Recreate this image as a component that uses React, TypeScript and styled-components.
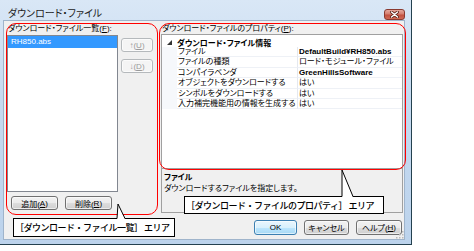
import styled, { createGlobalStyle } from 'styled-components';

const GlobalStyle = createGlobalStyle`
  html, body {
    margin: 0;
    padding: 0;
    background: #fff;
  }
  body {
    font-family: "Liberation Sans", "Noto Sans CJK JP", sans-serif;
    font-feature-settings: "palt" 1;
    color: #000;
  }
`;

const Desktop = styled.div`
  position: relative;
  width: 474px;
  height: 251px;
  overflow: hidden;
  background: #fff;
`;

const Window = styled.div`
  width: 412px;
  height: 245px;
  box-sizing: border-box;
  display: flex;
  flex-direction: column;
  padding: 0 6px 4px 3px;
  background: linear-gradient(180deg, #d9e7f6 0%, #c6daf0 40%, #bcd3ec 100%);
  border-right: 1px solid #24414f;
  border-bottom: 1px solid #24414f;
`;

const TitleBar = styled.div`
  height: 20px;
  box-sizing: border-box;
  padding: 6px 0 0 5px;
  display: flex;
  align-items: center;
`;

const Title = styled.span`
  font-size: 10px;
  line-height: 13px;
  color: #1b1b1b;
`;

const CloseButton = styled.div`
  margin-left: auto;
  margin-top: 3px;
  width: 21px;
  height: 11px;
  box-sizing: border-box;
  border: 1px solid #8a3a30;
  border-radius: 3px;
  background: linear-gradient(180deg, #e6a89c 0%, #d57e6f 45%, #c2503f 55%, #cf6a55 100%);
  display: flex;
  align-items: center;
  justify-content: center;
`;

const Client = styled.div`
  position: relative;
  flex: 1;
  display: flex;
  flex-direction: column;
  padding: 3px 1px 4px 3px;
  background: #f0f0f0;
  border: 1px solid #9fb4cb;
`;

const Main = styled.div`
  height: 189px;
  display: flex;
  gap: 7px;
`;

const LeftPane = styled.div`
  width: 146px;
  display: flex;
  flex-direction: column;
`;

const RightPane = styled.div`
  flex: 1;
  display: flex;
  flex-direction: column;
  padding-left: 1px;
`;

const Label = styled.div<{ $h: number }>`
  height: ${(p) => p.$h}px;
  font-size: 8px;
  line-height: 10px;
  padding-left: 1px;
  white-space: nowrap;
`;

const Key = styled.span`
  text-decoration: underline;
`;

const ListRow = styled.div`
  display: flex;
  gap: 3px;
`;

const ListBox = styled.div`
  width: 111px;
  height: 157px;
  box-sizing: border-box;
  border: 1px solid #828790;
  background: #fff;
`;

const ListItem = styled.div<{ $selected?: boolean }>`
  height: 12px;
  font-size: 8px;
  line-height: 12px;
  padding-left: 3px;
  background: ${(p) => (p.$selected ? '#3399ff' : 'transparent')};
  color: ${(p) => (p.$selected ? '#fff' : '#000')};
`;

const SideButtons = styled.div`
  padding-top: 3px;
  display: flex;
  flex-direction: column;
  gap: 7px;
`;

const Button = styled.div<{ $w: number; $h?: number; $focused?: boolean; $disabled?: boolean }>`
  width: ${(p) => p.$w}px;
  height: ${(p) => p.$h ?? 14}px;
  box-sizing: border-box;
  display: flex;
  align-items: center;
  justify-content: center;
  font-size: 8px;
  white-space: nowrap;
  border-radius: 3px;
  color: ${(p) => (p.$disabled ? '#9a9a9a' : '#000')};
  border: 1px solid
    ${(p) => (p.$disabled ? '#b5b9bc' : p.$focused ? '#3c7fb1' : '#707070')};
  background: ${(p) =>
    p.$disabled
      ? '#f4f4f4'
      : p.$focused
        ? 'linear-gradient(180deg, #eaf6fd 0%, #d9f0fc 50%, #bee6fd 51%, #a7d9f5 100%)'
        : 'linear-gradient(180deg, #f2f2f2 0%, #ebebeb 50%, #dddddd 51%, #cfcfcf 100%)'};
  box-shadow: inset 0 0 0 1px rgba(255, 255, 255, 0.6);
`;

const ButtonRow = styled.div`
  margin-top: 4px;
  padding-left: 4px;
  display: flex;
  gap: 7px;
`;

const Grid = styled.div`
  height: 135px;
  box-sizing: border-box;
  border: 1px solid #a0a0a0;
  background: #fff;
  padding-top: 2px;
`;

const CategoryRow = styled.div`
  height: 10px;
  display: flex;
  align-items: center;
  font-size: 8px;
  font-weight: bold;
`;

const Expander = styled.div`
  width: 15px;
  display: flex;
  justify-content: center;
  align-items: center;
`;

const PropRow = styled.div`
  height: 10.4px;
  display: flex;
  font-size: 8px;
  line-height: 10px;
`;

const MarginCell = styled.div`
  width: 15px;
  background: #f6f8fb;
`;

const NameCell = styled.div`
  width: 121px;
  padding-left: 1px;
  box-sizing: border-box;
  border-bottom: 1px solid #eef1f6;
  border-right: 1px solid #e4e8ef;
  white-space: nowrap;
  overflow: hidden;
`;

const ValueCell = styled.div<{ $bold?: boolean }>`
  flex: 1;
  padding-left: 1px;
  border-bottom: 1px solid #eef1f6;
  font-weight: ${(p) => (p.$bold ? 'bold' : 'normal')};
  white-space: nowrap;
  overflow: hidden;
`;

const Description = styled.div`
  flex: 1;
  border: 1px solid #a0a0a0;
  border-top: none;
  padding: 3px 0 0 2px;
  font-size: 8px;
  line-height: 11px;
`;

const DescTitle = styled.div`
  font-weight: bold;
`;

const Footer = styled.div`
  margin-top: 7px;
  display: flex;
  justify-content: flex-end;
  gap: 7px;
  padding-right: 1px;
`;

const Grip = styled.svg`
  position: absolute;
  right: 0;
  bottom: 0;
`;

const Highlight = styled.div<{ $x: number; $y: number; $w: number; $h: number }>`
  position: absolute;
  left: ${(p) => p.$x}px;
  top: ${(p) => p.$y}px;
  width: ${(p) => p.$w}px;
  height: ${(p) => p.$h}px;
  box-sizing: border-box;
  border: 1px solid #ff0000;
  border-radius: 10px;
`;

const Callout = styled.div<{ $x: number; $y: number; $w: number; $h: number }>`
  position: absolute;
  left: ${(p) => p.$x}px;
  top: ${(p) => p.$y}px;
  width: ${(p) => p.$w}px;
  height: ${(p) => p.$h}px;
  box-sizing: border-box;
  border: 1px solid #000;
  background: #fff;
  display: flex;
  align-items: center;
  padding-left: 1px;
  font-family: "Noto Sans CJK JP", sans-serif;
  font-feature-settings: normal;
  font-size: 9px;
  font-weight: 500;
  letter-spacing: -0.5px;
  white-space: nowrap;
`;

const Pointer = styled.svg<{ $x: number; $y: number }>`
  position: absolute;
  left: ${(p) => p.$x}px;
  top: ${(p) => p.$y}px;
  overflow: visible;
`;

const props = [
  { name: 'ファイル', value: 'DefaultBuild¥RH850.abs', bold: true },
  { name: 'ファイルの種類', value: 'ロード・モジュール・ファイル' },
  { name: 'コンパイラベンダ', value: 'GreenHillsSoftware', bold: true },
  { name: 'オブジェクトをダウンロードする', value: 'はい' },
  { name: 'シンボルをダウンロードする', value: 'はい' },
  { name: '入力補完機能用の情報を生成する', value: 'はい' },
];

export default function App() {
  return (
    <Desktop>
      <GlobalStyle />
      <Window>
        <TitleBar>
          <Title>ダウンロード・ファイル</Title>
          <CloseButton>
            <svg width="9" height="7" viewBox="0 0 9 7">
              <path d="M1.5 1 L7.5 6 M7.5 1 L1.5 6" stroke="#5a2019" strokeWidth="3" strokeLinecap="round" />
              <path d="M1.5 1 L7.5 6 M7.5 1 L1.5 6" stroke="#fff" strokeWidth="1.5" strokeLinecap="round" />
            </svg>
          </CloseButton>
        </TitleBar>
        <Client>
          <Main>
            <LeftPane>
              <Label $h={11}>
                ダウンロード・ファイル一覧(<Key>F</Key>):
              </Label>
              <ListRow>
                <ListBox>
                  <ListItem $selected>RH850.abs</ListItem>
                </ListBox>
                <SideButtons>
                  <Button $w={32} $disabled>
                    ↑(<Key>U</Key>)
                  </Button>
                  <Button $w={32} $disabled>
                    ↓(<Key>D</Key>)
                  </Button>
                </SideButtons>
              </ListRow>
              <ButtonRow>
                <Button $w={47}>
                  追加(<Key>A</Key>)
                </Button>
                <Button $w={47}>
                  削除(<Key>R</Key>)
                </Button>
              </ButtonRow>
            </LeftPane>
            <RightPane>
              <Label $h={10}>
                ダウンロード・ファイルのプロパティ(<Key>P</Key>):
              </Label>
              <Grid>
                <CategoryRow>
                  <Expander>
                    <svg width="5" height="5" viewBox="0 0 5 5">
                      <polygon points="5,0 5,5 0,5" fill="#333" />
                    </svg>
                  </Expander>
                  ダウンロード・ファイル情報
                </CategoryRow>
                {props.map((p) => (
                  <PropRow key={p.name}>
                    <MarginCell />
                    <NameCell>{p.name}</NameCell>
                    <ValueCell $bold={p.bold}>{p.value}</ValueCell>
                  </PropRow>
                ))}
              </Grid>
              <Description>
                <DescTitle>ファイル</DescTitle>
                <div>ダウンロードするファイルを指定します。</div>
              </Description>
            </RightPane>
          </Main>
          <Footer>
            <Button $w={43} $h={15} $focused>
              OK
            </Button>
            <Button $w={45} $h={15}>
              キャンセル
            </Button>
            <Button $w={46} $h={15}>
              ヘルプ(<Key>H</Key>)
            </Button>
          </Footer>
          <Grip width="8" height="8" viewBox="0 0 8 8">
            {[
              [6, 0],
              [6, 3],
              [3, 3],
              [6, 6],
              [3, 6],
              [0, 6],
            ].map(([x, y]) => (
              <rect key={`${x}-${y}`} x={x} y={y} width="1.5" height="1.5" fill="#b8b8b8" />
            ))}
          </Grip>
        </Client>
      </Window>

      <Highlight $x={6} $y={23} $w={152} $h={192} />
      <Highlight $x={159} $y={23} $w={247} $h={147} />

      <Callout $x={184} $y={196} $w={200} $h={18}>
        ［ダウンロード・ファイルのプロパティ］ エリア
      </Callout>
      <Pointer $x={340} $y={169} width="16" height="29">
        <polygon points="2,1 2,28 13,28" fill="#fff" />
        <path d="M2 1 L2 27.5 M2 1 L13 27.5" stroke="#000" strokeWidth="1" fill="none" />
      </Pointer>

      <Callout $x={13} $y={218} $w={162} $h={19}>
        ［ダウンロード・ファイル一覧］ エリア
      </Callout>
      <Pointer $x={114} $y={203} width="14" height="17">
        <polygon points="4,1 3,16 11,16" fill="#fff" />
        <path d="M4 1 L3 15.5 M4 1 L11 15.5" stroke="#000" strokeWidth="1" fill="none" />
      </Pointer>
    </Desktop>
  );
}
